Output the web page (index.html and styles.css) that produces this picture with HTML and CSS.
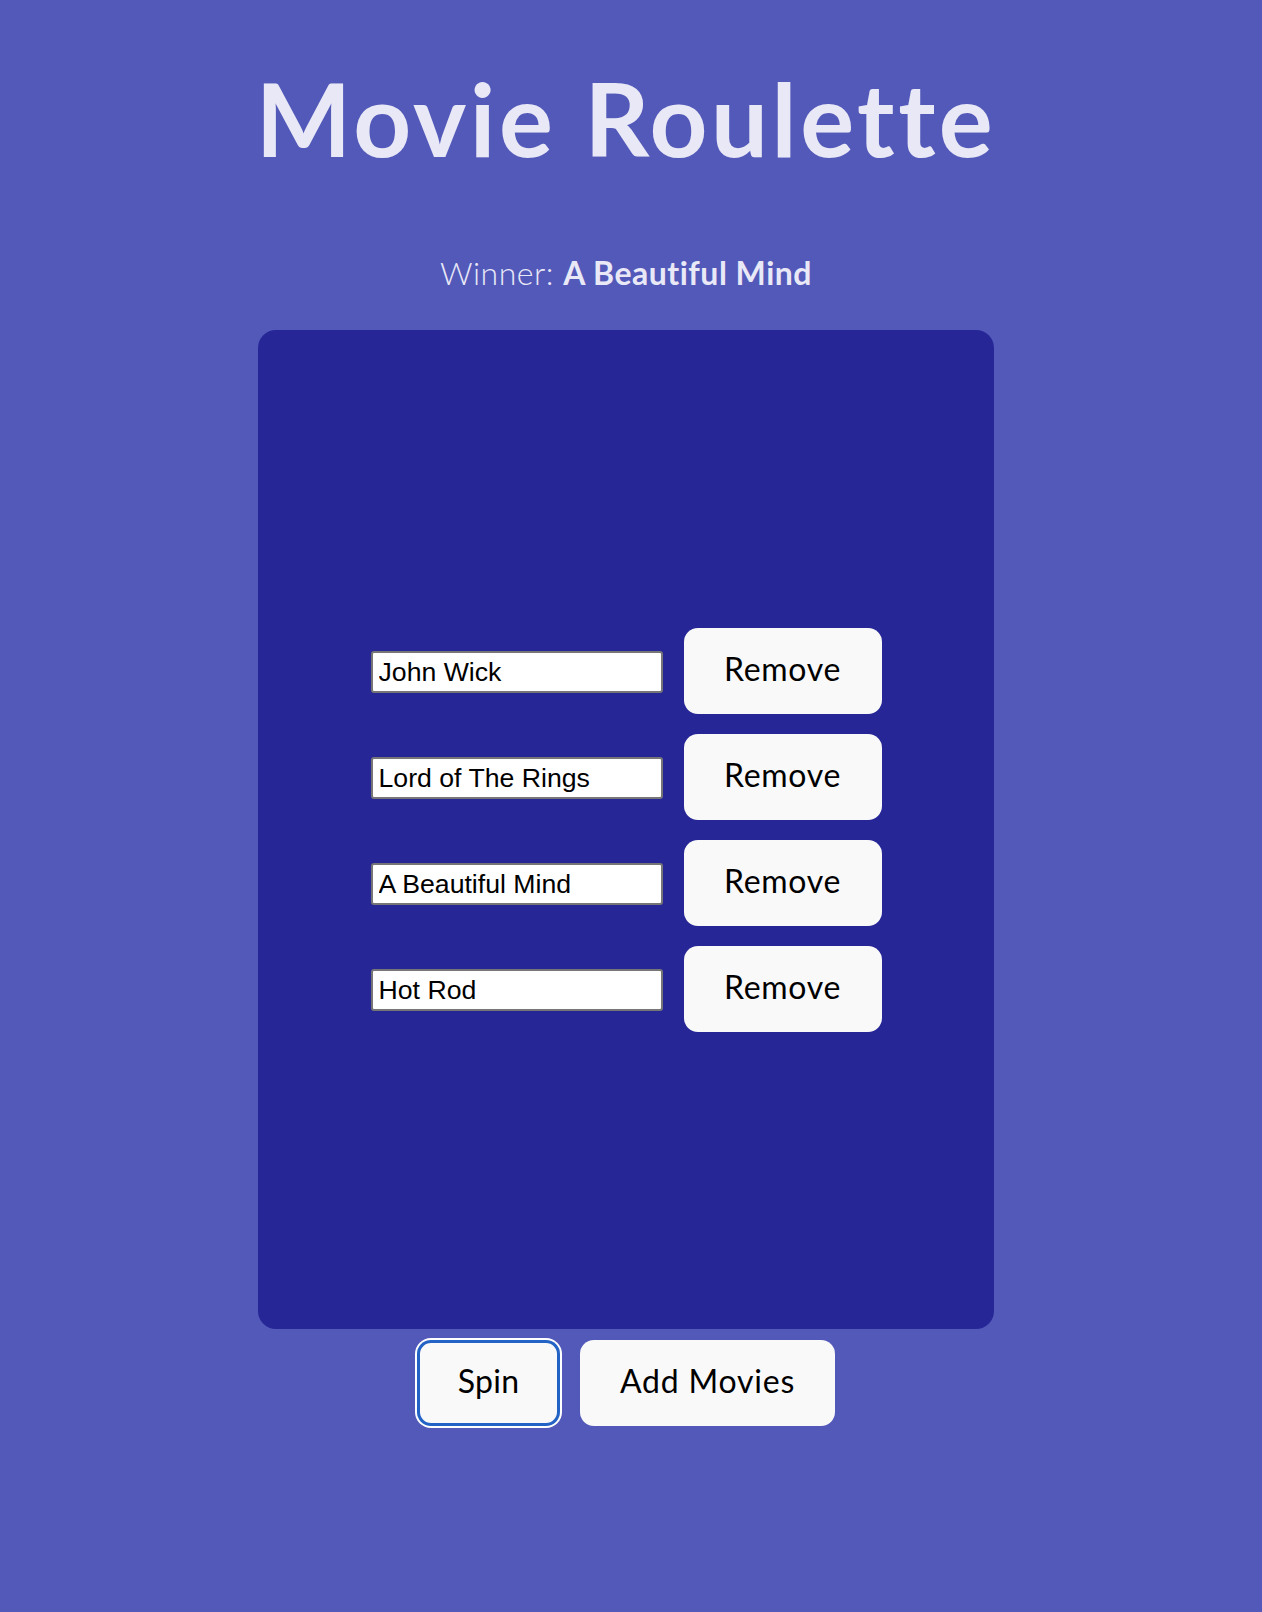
FILE: index.html
```html
<!DOCTYPE html>
<html lang="en">
<head>
<meta charset="utf-8">
<title>Movie Roulette</title>
<link rel="stylesheet" href="styles.css">
</head>
<body>
<main class="app">
  <h1 class="title">Movie Roulette</h1>
  <p class="winner">Winner: <strong>A Beautiful Mind</strong></p>
  <section class="wheel">
    <div class="row">
      <input class="movie-input" type="text" value="John Wick">
      <button class="btn btn-remove">Remove</button>
    </div>
    <div class="row">
      <input class="movie-input" type="text" value="Lord of The Rings">
      <button class="btn btn-remove">Remove</button>
    </div>
    <div class="row">
      <input class="movie-input" type="text" value="A Beautiful Mind">
      <button class="btn btn-remove">Remove</button>
    </div>
    <div class="row">
      <input class="movie-input" type="text" value="Hot Rod">
      <button class="btn btn-remove">Remove</button>
    </div>
  </section>
  <div class="actions">
    <button class="btn btn-spin">Spin</button>
    <button class="btn btn-add">Add Movies</button>
  </div>
</main>
</body>
</html>
```

FILE: styles.css
```css
html, body {
  margin: 0;
  padding: 0;
}

body {
  background: #5259b9;
  font-family: Lato, "Noto Sans", sans-serif;
  color: #e9e8f6;
  min-height: 1612px;
}

.app {
  display: flex;
  flex-direction: column;
  align-items: center;
  padding-right: 10px;
}

.title {
  margin: 68px 0 0;
  font-size: 101px;
  line-height: 101px;
  font-weight: 700;
  letter-spacing: 3.5px;
  color: #e9e8f6;
}

.winner {
  margin: 84px 0 0;
  font-size: 32px;
  line-height: 40px;
  font-weight: 300;
  letter-spacing: 0.5px;
  color: #e9e8f6;
}

.winner strong {
  font-weight: 700;
}

.wheel {
  margin-top: 37px;
  width: 736px;
  height: 999px;
  box-sizing: border-box;
  background: #262697;
  border-radius: 18px;
  display: flex;
  flex-direction: column;
  justify-content: center;
  align-items: center;
  gap: 20px;
}

.row {
  display: flex;
  align-items: baseline;
  gap: 21px;
}

.movie-input {
  box-sizing: border-box;
  width: 292px;
  height: 42px;
  padding: 0 6px;
  border: 2px solid #767676;
  border-radius: 3px;
  background: #fff;
  color: #000;
  font-family: "Liberation Sans", Arial, sans-serif;
  font-size: 26.67px;
}

.btn {
  box-sizing: border-box;
  height: 86px;
  padding: 21px 0 25px;
  border: none;
  border-radius: 14px;
  background: #f9f9f9;
  color: #000;
  font-family: Lato, "Noto Sans", sans-serif;
  font-size: 32px;
  line-height: 40px;
  font-weight: 400;
  letter-spacing: 0.7px;
  text-align: center;
}

.btn-remove {
  width: 198px;
}

.actions {
  margin-top: 11px;
  display: flex;
  gap: 20px;
}

.btn-spin {
  width: 143px;
  letter-spacing: 0.3px;
  box-shadow: inset 0 0 0 3px #2463c6, 0 0 0 2px #ffffff;
}

.btn-add {
  width: 255px;
  letter-spacing: 0.8px;
}
```
